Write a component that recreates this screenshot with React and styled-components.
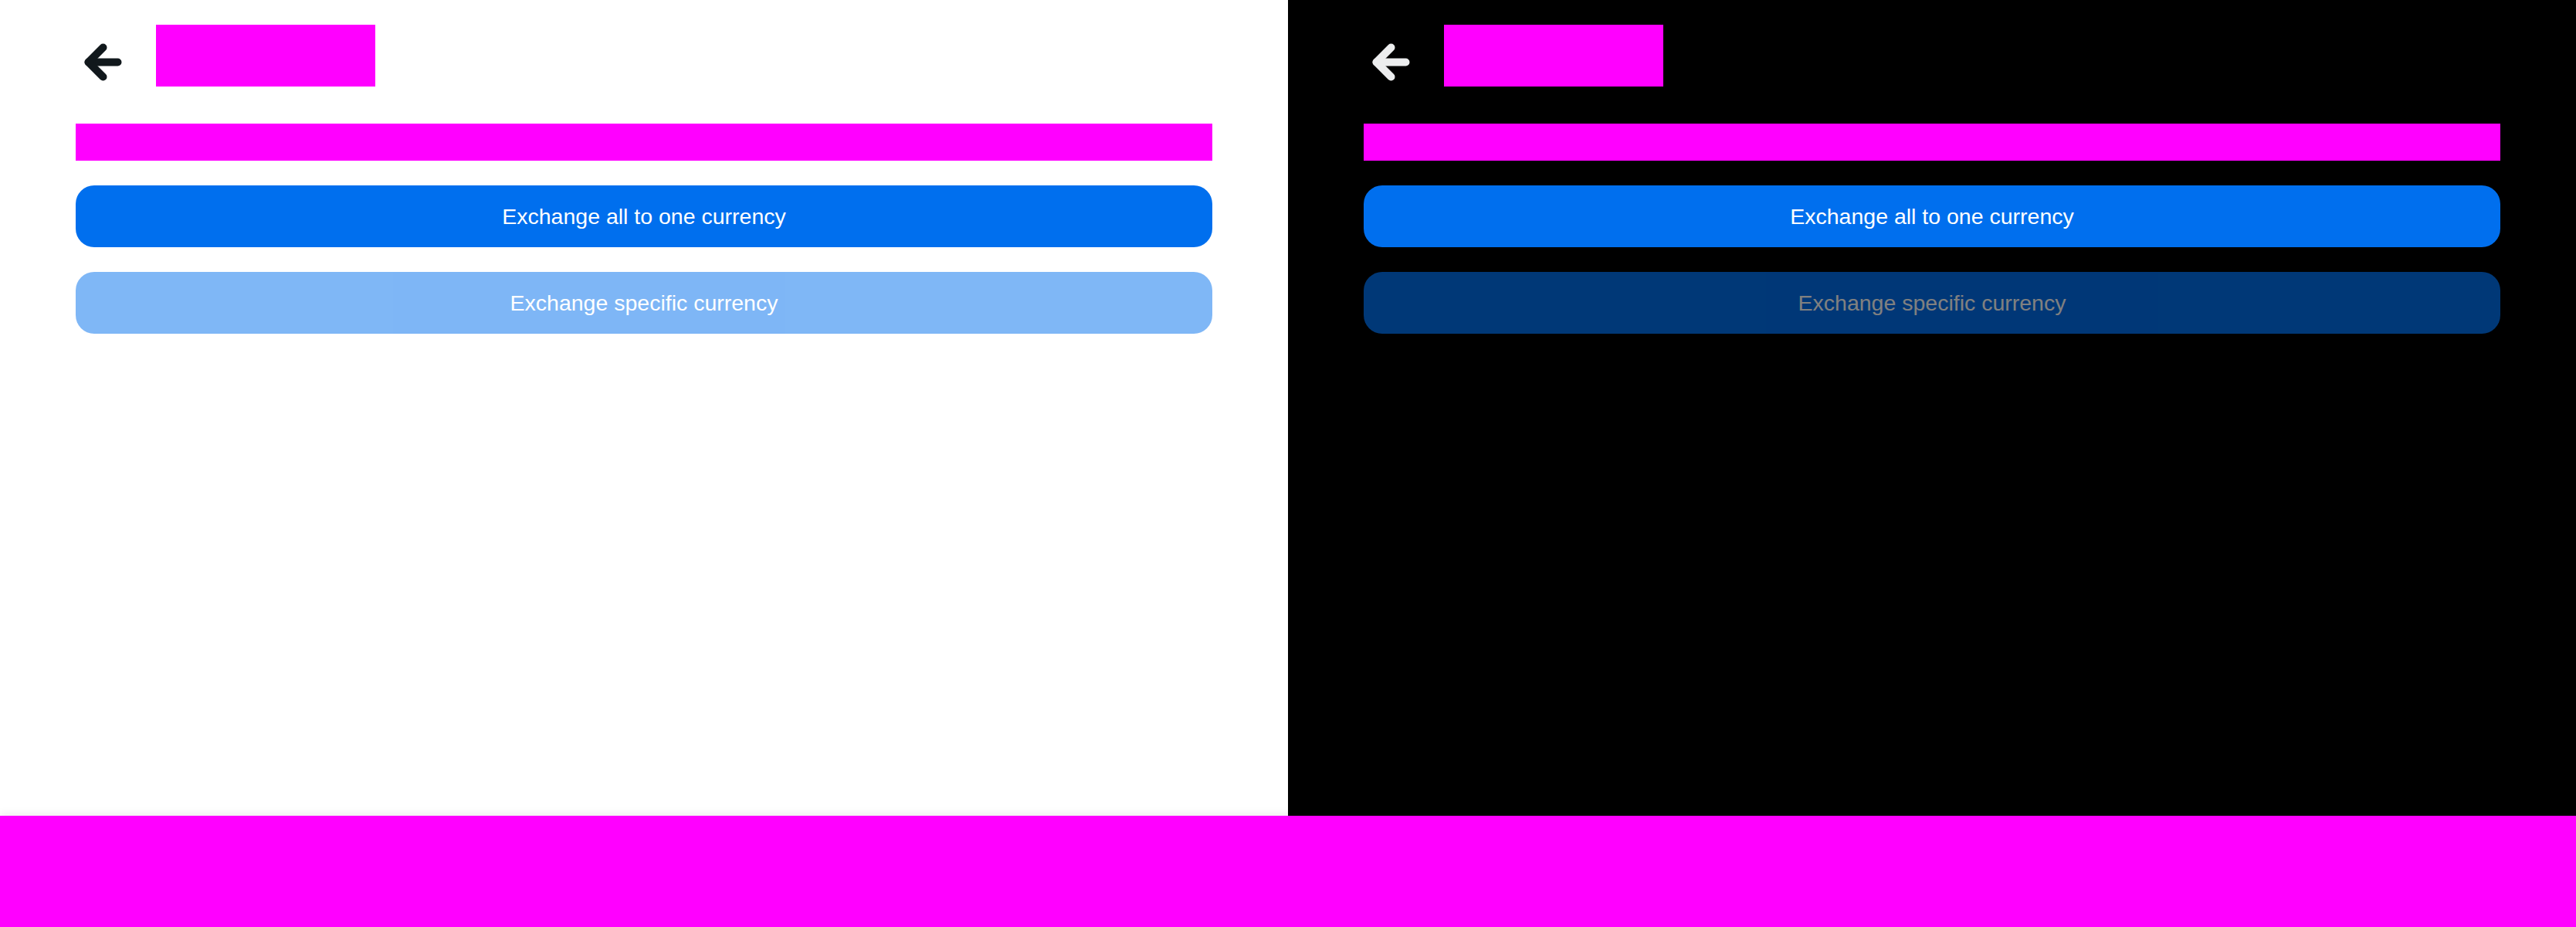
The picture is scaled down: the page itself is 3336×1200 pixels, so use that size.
import React from "react";
import styled, { createGlobalStyle } from "styled-components";

const GlobalStyle = createGlobalStyle`
  html, body {
    margin: 0;
    padding: 0;
  }

  body {
    font-family: "Liberation Sans", Arial, sans-serif;
  }
`;

const Page = styled.div`
  display: flex;
  flex-direction: column;
  width: 3336px;
  height: 1200px;
  overflow: hidden;
`;

const Panels = styled.div`
  display: grid;
  grid-template-columns: 1fr 1fr;
  flex: 1;
`;

const Panel = styled.div`
  display: flex;
  flex-direction: column;
  padding: 32px 98px 0;
  background: ${props => (props.dark ? "#000" : "#fff")};
  color: ${props => (props.dark ? "#ECEDEE" : "#11181C")};
`;

const Header = styled.div`
  display: flex;
  align-items: flex-start;
  gap: 34px;
  height: 80px;
`;

const BackButton = styled.button`
  display: flex;
  align-items: center;
  justify-content: center;
  width: 70px;
  height: 80px;
  margin-top: 8px;
  padding: 0;
  border: none;
  background: transparent;
  color: inherit;
  cursor: pointer;
`;

const TitlePlaceholder = styled.div`
  width: 284px;
  height: 80px;
  background: #ff00ff;
`;

const Content = styled.div`
  display: flex;
  flex-direction: column;
  gap: 32px;
  margin-top: 48px;
`;

const BalancePlaceholder = styled.div`
  height: 48px;
  background: #ff00ff;
`;

const ActionButton = styled.button`
  display: flex;
  align-items: center;
  justify-content: center;
  height: 80px;
  border: none;
  border-radius: 24px;
  background: #006fee;
  color: #fff;
  font-family: "Liberation Sans", Arial, sans-serif;
  font-size: 28.5px;
  opacity: ${props => (props.disabled ? 0.5 : 1)};
  cursor: ${props => (props.disabled ? "default" : "pointer")};
`;

const BottomBar = styled.div`
  height: 144px;
  background: #ff00ff;
  box-shadow: 0 -3px 10px rgba(0, 0, 0, 0.07);
  position: relative;
`;

const ArrowLeftIcon = () => (
  <svg
    width="65"
    height="65"
    viewBox="0 0 24 24"
    fill="none"
    stroke="currentColor"
    strokeWidth="3.7"
    strokeLinecap="round"
    strokeLinejoin="round"
  >
    <path d="M19 12H5" />
    <path d="M12 19l-7-7 7-7" />
  </svg>
);

const ExchangeScreen = ({ dark }) => (
  <Panel dark={dark}>
    <Header>
      <BackButton aria-label="Back">
        <ArrowLeftIcon />
      </BackButton>
      <TitlePlaceholder />
    </Header>
    <Content>
      <BalancePlaceholder />
      <ActionButton>Exchange all to one currency</ActionButton>
      <ActionButton disabled>Exchange specific currency</ActionButton>
    </Content>
  </Panel>
);

const App = () => {
  return (
    <>
      <GlobalStyle />
      <Page>
        <Panels>
          <ExchangeScreen />
          <ExchangeScreen dark />
        </Panels>
        <BottomBar />
      </Page>
    </>
  );
};

export default App;
